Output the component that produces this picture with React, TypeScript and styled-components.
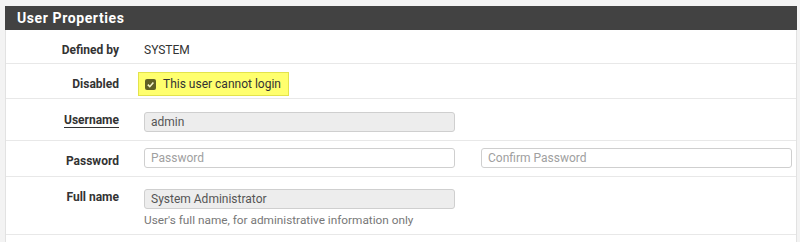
import React from 'react';
import styled, { createGlobalStyle } from 'styled-components';

const GlobalStyle = createGlobalStyle`
  html, body {
    margin: 0;
    padding: 0;
    background: #f3f3f3;
    font-family: Roboto, "Liberation Sans", Arial, sans-serif;
  }
`;

const Page = styled.div`
  padding: 6px 3px 0 5px;
  height: 242px;
  box-sizing: border-box;
  overflow: hidden;
`;

const Panel = styled.section`
  background: #ffffff;
  border-left: 1px solid #e2e2e2;
  border-right: 1px solid #e2e2e2;
  height: 236px;
`;

const PanelHeader = styled.h2`
  margin: 0 -1px;
  height: 24px;
  padding: 0 12px;
  background: #424242;
  color: #ffffff;
  font-size: 14px;
  font-weight: 700;
  letter-spacing: 0.6px;
  line-height: 24px;
`;

const Row = styled.div<{ $pt: number; $pb: number }>`
  display: grid;
  grid-template-columns: 113px 1fr;
  column-gap: 25px;
  padding: ${(p) => p.$pt}px 4px ${(p) => p.$pb}px 0;
  border-bottom: 1px solid #e8e8e8;
  font-size: 12px;
  color: #333;
`;

const Label = styled.div<{ $top: number }>`
  margin-top: ${(p) => p.$top}px;
  text-align: right;
  font-weight: 700;
  line-height: 14px;
  color: #333;
`;

const LabelHint = styled.span`
  border-bottom: 1.5px solid #333;
`;

const Value = styled.div`
  line-height: 14px;
`;

const Highlight = styled.label`
  display: inline-flex;
  align-items: center;
  gap: 7px;
  height: 22px;
  margin-left: -6px;
  padding: 0 7px 0 6px;
  background: #ffff6e;
  border: 1px solid #e3e34c;
  font-size: 12px;
  color: #333;
`;

const CheckMark = styled.span`
  display: inline-flex;
  align-items: center;
  justify-content: center;
  width: 11px;
  height: 11px;
  border-radius: 2px;
  background: #5f5f26;
`;

const Inputs = styled.div`
  display: flex;
  gap: 26px;
`;

const Input = styled.input`
  box-sizing: border-box;
  width: 311px;
  height: 20px;
  padding: 0 6px;
  border: 1px solid #cfcfcf;
  border-radius: 3px;
  background: #fff;
  font-family: inherit;
  font-size: 12px;
  color: #555;
  outline: none;

  &:disabled {
    background: #ededed;
    color: #555;
  }

  &::placeholder {
    color: #a0a0a0;
  }
`;

const Help = styled.div`
  margin-top: 4px;
  font-size: 11.8px;
  line-height: 14px;
  color: #777;
`;

export default function App() {
  return (
    <>
      <GlobalStyle />
      <Page>
        <Panel>
          <PanelHeader>User Properties</PanelHeader>

          <Row $pt={13} $pb={6}>
            <Label $top={0}>Defined by</Label>
            <Value>SYSTEM</Value>
          </Row>

          <Row $pt={8} $pb={2}>
            <Label $top={5}>Disabled</Label>
            <Value>
              <Highlight>
                <CheckMark>
                  <svg width="9" height="9" viewBox="0 0 10 10">
                    <path d="M2 5.2 L4.2 7.4 L8.2 2.8" fill="none" stroke="#f4f4c8" strokeWidth="1.8" />
                  </svg>
                </CheckMark>
                This user cannot login
              </Highlight>
            </Value>
          </Row>

          <Row $pt={13} $pb={8}>
            <Label $top={1}>
              <LabelHint>Username</LabelHint>
            </Label>
            <Value>
              <Input value="admin" disabled readOnly />
            </Value>
          </Row>

          <Row $pt={7} $pb={8}>
            <Label $top={6}>Password</Label>
            <Inputs>
              <Input type="password" placeholder="Password" />
              <Input type="password" placeholder="Confirm Password" />
            </Inputs>
          </Row>

          <Row $pt={12} $pb={7}>
            <Label $top={1}>Full name</Label>
            <Value>
              <Input value="System Administrator" disabled readOnly />
              <Help>User's full name, for administrative information only</Help>
            </Value>
          </Row>
        </Panel>
      </Page>
    </>
  );
}
